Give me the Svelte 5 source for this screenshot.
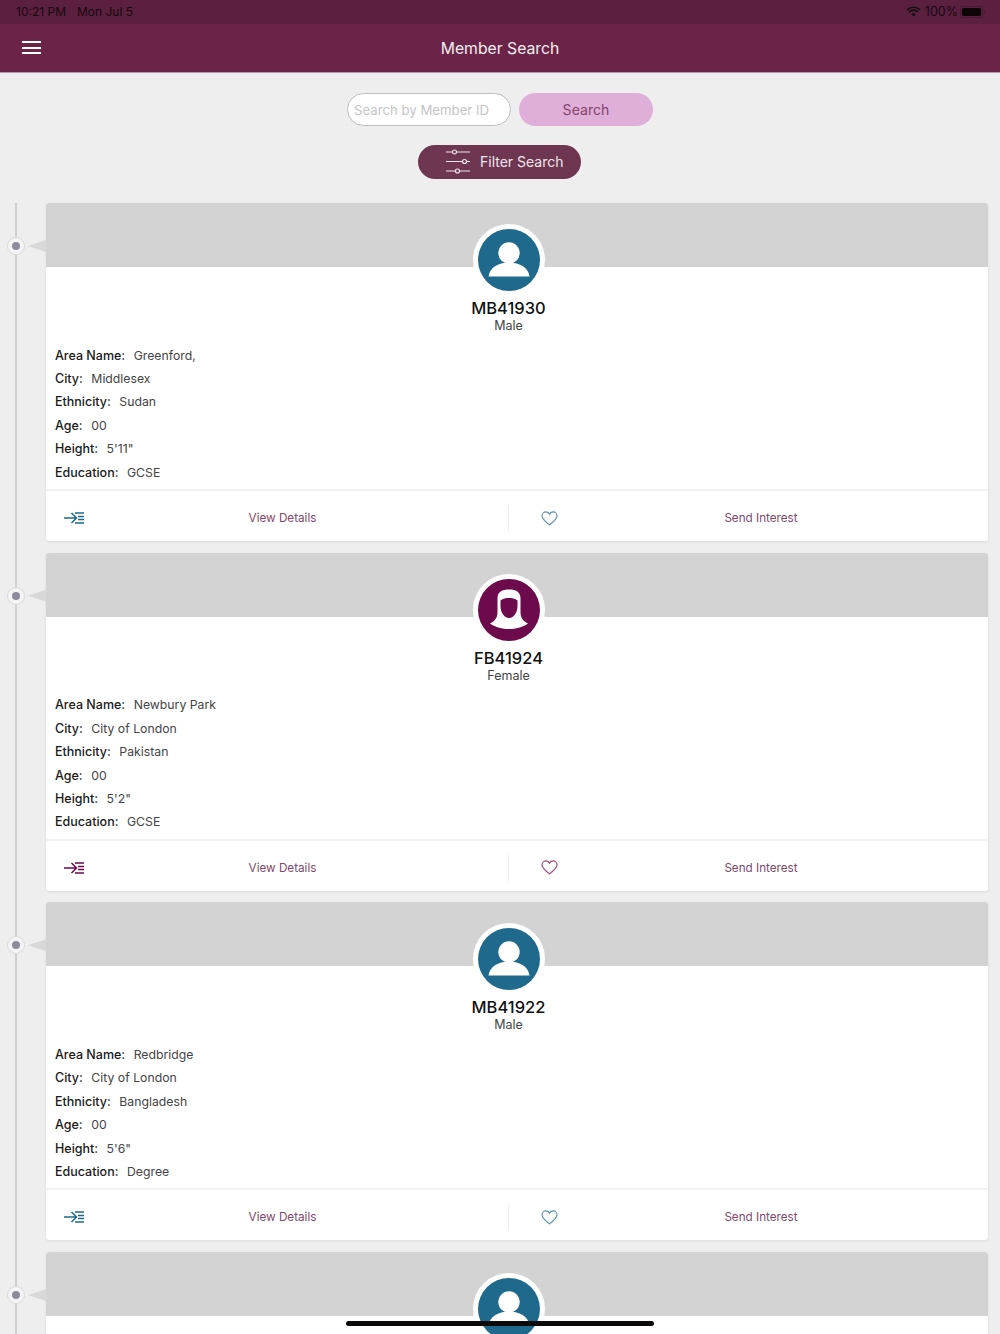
<script>
  const members = [
    { id: 'MB41930', gender: 'Male', area: 'Greenford,', city: 'Middlesex', ethnicity: 'Sudan', height: `5'11"`, education: 'GCSE' },
    { id: 'FB41924', gender: 'Female', area: 'Newbury Park', city: 'City of London', ethnicity: 'Pakistan', height: `5'2"`, education: 'GCSE' },
    { id: 'MB41922', gender: 'Male', area: 'Redbridge', city: 'City of London', ethnicity: 'Bangladesh', height: `5'6"`, education: 'Degree' },
    { gender: 'Male' }
  ];
  const rows = (m) => [
    ['Area Name:', m.area],
    ['City:', m.city],
    ['Ethnicity:', m.ethnicity],
    ['Age:', '00'],
    ['Height:', m.height],
    ['Education:', m.education]
  ];
</script>

<div class="screen">
  <div class="status">
    <div class="status-left"><span>10:21 PM</span><span>Mon Jul 5</span></div>
    <div class="status-right">
      <svg width="15" height="11" viewBox="0 0 15 11">
        <path d="M7.500 10.600 5.300 8.200a3.200 3.200 0 0 1 4.400 0Z" fill="#111" />
        <path d="M1 3.900a9.400 9.400 0 0 1 13 0M3 6a6.400 6.400 0 0 1 9 0" fill="none" stroke="#111" stroke-width="1.600" />
      </svg>
      <span>100%</span>
      <div class="battery"><div class="battery-fill"></div></div>
      <div class="battery-tip"></div>
    </div>
  </div>

  <header class="topbar">
    <button class="menu" aria-label="Menu"><span></span><span></span><span></span></button>
    <h1>Member Search</h1>
  </header>

  <div class="search-row">
    <input class="search-input" placeholder="Search by Member ID" />
    <button class="search-btn">Search</button>
  </div>

  <div class="filter-row">
    <button class="filter-btn">
      <svg width="26" height="26" viewBox="0 0 26 26" fill="none" stroke="#f0e6ec" stroke-width="1.200">
        <path d="M1 3h6.500M11.500 3H25M1 12.500h16.500M21.500 12.500H25M1 22h9.500M14.500 22H25" />
        <circle cx="9.500" cy="3" r="2" />
        <circle cx="19.500" cy="12.500" r="2" />
        <circle cx="12.500" cy="22" r="2" />
      </svg>
      <span>Filter Search</span>
    </button>
  </div>

  <div class="timeline">
    <div class="line"></div>
    {#each members as m}
      {@const female = m.gender === 'Female'}
      <article class="card" class:female>
        <div class="dot"><i></i></div>
        <div class="pointer"></div>
        <div class="band"></div>
        <div class="head">
          <div class="avatar">
            <svg width="62" height="62" viewBox="0 0 62 62">
              <circle cx="31" cy="31" r="31" class="avatar-bg" />
              {#if female}
                <path fill="#fff" d="M12 44.500C17 42 19.500 39 19.500 33V19C19.500 13 24 10.500 31 10.500S42.500 13 42.500 19V33C42.500 39 45 42 50 44.500C44 48.500 38 50 31 50S18 48.500 12 44.500Z" />
                <path class="avatar-fill" d="M22.500 21.500C25 19.500 28 19 31 19S37 19.500 39.500 21.500V27C39.500 33 36 39 31 39S22.500 33 22.500 27Z" />
              {:else}
                <circle cx="31" cy="24" r="10.700" fill="#fff" />
                <path fill="#fff" d="M10.500 47.500C11.500 39 20 33.500 31 33.500S50.500 39 51.500 47.500Z" />
              {/if}
            </svg>
          </div>
          {#if m.id}
            <div class="name">{m.id}</div>
            <div class="gender">{m.gender}</div>
          {/if}
        </div>
        {#if m.id}
          <dl class="info">
            {#each rows(m) as [label, value]}
              <div class="row"><dt>{label}</dt><dd>{value}</dd></div>
            {/each}
          </dl>
          <div class="actions">
            <div class="action left">
              <svg class="tone" width="20" height="12" viewBox="0 0 20 12" fill="none" stroke-width="1.500">
                <path d="M0 6h12M7.500 1l5 5-5 5M11 1h9M14 4.500h6M14 7.500h6M11 11h9" />
              </svg>
              <span>View Details</span>
            </div>
            <div class="action right">
              <svg class="tone" width="17" height="15" viewBox="0 0 18 16" fill="none" stroke-width="1.300">
                <path d="M9 14.800C3.500 10.300 1 8 1 5.200 1 2.800 2.900 1 5 1c1.700 0 3.100.8 4 2.300C9.900 1.800 11.300 1 13 1c2.100 0 4 1.800 4 4.200 0 2.800-2.500 5.100-8 9.600Z" />
              </svg>
              <span>Send Interest</span>
            </div>
          </div>
        {/if}
      </article>
    {/each}
  </div>

  <div class="home-bar"></div>
</div>

<style>
  :global(body) { margin: 0; }
  .screen {
    position: relative;
    width: 1000px;
    height: 1334px;
    overflow: hidden;
    background: #eeeeee;
    font-family: Inter, "Liberation Sans", sans-serif;
    color: #111;
  }
  .status {
    height: 24px;
    box-sizing: border-box;
    padding: 0 15px 1px 16px;
    background: #5b203e;
    display: flex;
    justify-content: space-between;
    align-items: center;
    font-size: 12px;
    color: #17090f;
  }
  .status-left { display: flex; gap: 11px; }
  .status-right { display: flex; align-items: center; gap: 4px; font-size: 12.500px; }
  .battery {
    width: 19px;
    height: 8px;
    margin-left: -2px;
    border: 1px solid #4a1a33;
    border-radius: 3px;
    padding: 1px;
    display: flex;
  }
  .battery-fill { flex: 1; background: #0d0508; border-radius: 1.500px; }
  .battery-tip { width: 1px; height: 4px; margin-left: -3px; background: #4a1a33; }
  .topbar {
    position: relative;
    height: 49px;
    background: #6b2348;
    display: flex;
    align-items: center;
    justify-content: center;
    border-bottom: 1px solid #b99bad;
    box-sizing: border-box;
  }
  .topbar h1 {
    margin: 0;
    font-size: 15.750px;
    font-weight: 400;
    color: #f4eef1;
  }
  .menu {
    position: absolute;
    left: 22px;
    top: 17px;
    width: 19px;
    padding: 0;
    border: 0;
    background: none;
    display: flex;
    flex-direction: column;
    gap: 3.500px;
  }
  .menu span { height: 2px; background: #fff; }
  .search-row {
    display: flex;
    justify-content: center;
    gap: 8px;
    margin-top: 20px;
  }
  .search-input {
    width: 164px;
    height: 33px;
    box-sizing: border-box;
    border: 1px solid #bdbdbd;
    border-radius: 17px;
    background: #fff;
    padding: 0 6px;
    font: inherit;
    font-size: 13.200px;
    outline: none;
  }
  .search-input::placeholder { color: #c5c5c5; opacity: 1; }
  .search-btn {
    width: 134px;
    height: 33px;
    border: 0;
    border-radius: 17px;
    background: #dfaed9;
    color: #83466f;
    font: inherit;
    font-size: 14.100px;
  }
  .filter-row {
    display: flex;
    justify-content: center;
    margin-top: 19px;
  }
  .filter-btn {
    width: 163px;
    height: 34px;
    margin-left: -1px;
    border: 0;
    border-radius: 17px;
    background: #6f3651;
    color: #f0e6ec;
    font: inherit;
    font-size: 14px;
    display: flex;
    align-items: center;
    gap: 9px;
    padding: 0 0 2px 27px;
  }
  .filter-btn svg { margin-top: 2px; }
  .timeline {
    position: relative;
    margin-top: 24px;
    padding-left: 46px;
    padding-right: 12px;
  }
  .line {
    position: absolute;
    left: 15px;
    top: 0;
    width: 2px;
    height: 1200px;
    background: #cfcfcf;
  }
  .card {
    position: relative;
    height: 338px;
    margin-bottom: 11.660px;
    background: #fff;
    border-radius: 3px;
    box-shadow: 0 1px 3px rgba(0, 0, 0, 0.08);
    --tone: #1f6a8c;
    --tone-soft: #5c94ae;
  }
  .card.female {
    --tone: #6d0a4b;
    --tone-soft: #9c4a7c;
  }
  .dot {
    position: absolute;
    left: -39px;
    top: 34px;
    width: 18px;
    height: 18px;
    box-sizing: border-box;
    border: 1px solid #d9d9d9;
    border-radius: 50%;
    background: #f4f4f4;
    display: flex;
    align-items: center;
    justify-content: center;
  }
  .dot i { width: 8px; height: 8px; border-radius: 50%; background: #8f8b9e; }
  .pointer {
    position: absolute;
    left: -18px;
    top: 37px;
    width: 18px;
    height: 12px;
    background: #d8d8d8;
    clip-path: polygon(0 50%, 100% 0, 100% 100%);
  }
  .band {
    height: 64px;
    background: #d3d3d3;
    border-radius: 3px 3px 0 0;
  }
  .head {
    width: 925px;
    text-align: center;
  }
  .avatar {
    position: relative;
    width: 62px;
    height: 62px;
    margin: -43px auto 0;
    border: 5px solid #fff;
    border-radius: 50%;
    background: #fff;
  }
  .avatar svg { display: block; }
  .avatar-bg, .avatar-fill { fill: var(--tone); }
  .name {
    margin-top: 2px;
    font-size: 16.500px;
    line-height: 20px;
    font-weight: 500;
    color: #111;
  }
  .gender {
    font-size: 12.500px;
    line-height: 15px;
    color: #444;
  }
  .info {
    margin: 10.500px 0 0;
    padding: 0 9px;
  }
  .row {
    display: flex;
    gap: 8.500px;
    height: 23.400px;
    align-items: center;
    font-size: 12.500px;
  }
  dt { font-weight: 500; color: #1a1a1a; }
  dd { margin: 0; color: #444; font-size: 12.250px; }
  .actions {
    position: absolute;
    left: 0;
    right: 0;
    bottom: 0;
    height: 52px;
    box-sizing: border-box;
    padding-top: 4px;
    border-top: 2px solid #f2f2f2;
    display: flex;
    align-items: center;
    font-size: 11.700px;
    color: #82486a;
  }
  .action { display: flex; align-items: center; box-sizing: border-box; }
  .action span { flex: 1; text-align: center; }
  .action.left { width: 463px; height: 26px; padding: 0 27px 0 18px; border-right: 1px solid #ececec; }
  .action.right { flex: 1; padding: 0 24px 0 32px; }
  .tone { stroke: var(--tone-soft); }
  .left .tone { stroke: var(--tone); }
  .home-bar {
    position: absolute;
    left: 346px;
    top: 1321px;
    width: 308px;
    height: 5px;
    border-radius: 3px;
    background: #0a0a0a;
  }
</style>
